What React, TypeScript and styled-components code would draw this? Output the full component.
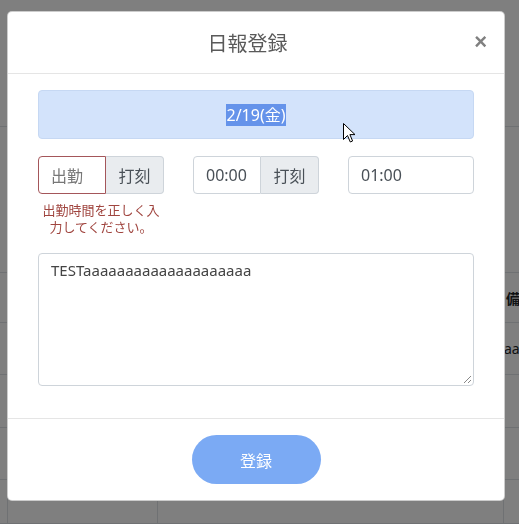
import React from "react";
import styled, { createGlobalStyle } from "styled-components";

const GlobalStyle = createGlobalStyle`
  html, body {
    margin: 0;
    padding: 0;
    width: 519px;
    height: 524px;
    overflow: hidden;
    background: #ffffff;
    font-family: "Noto Sans", "Noto Sans CJK JP", sans-serif;
  }
`;

/* ── Page behind the modal ── */

const Page = styled.div`
  display: flex;
  flex-direction: column;
  width: 519px;
  height: 524px;
`;

const TopArea = styled.div`
  height: 127px;
  border-bottom: 1px solid #dee2e6;
  box-sizing: border-box;
`;

const BgRow = styled.div<{ $h: number }>`
  display: grid;
  grid-template-columns: 7px 150px 346px 1fr;
  height: ${(p) => p.$h}px;
  border-bottom: 1px solid #dee2e6;
  box-sizing: border-box;
`;

const BgCell = styled.div<{ $bold?: boolean }>`
  display: flex;
  align-items: center;
  border-left: 1px solid #dee2e6;
  padding-left: ${(p) => (p.$bold ? 2 : 0)}px;
  font-size: 14px;
  font-weight: ${(p) => (p.$bold ? 700 : 400)};
  color: #212529;
  white-space: nowrap;
  overflow: hidden;
  &:first-child {
    border-left: none;
  }
`;

/* ── Modal ── */

const Overlay = styled.div`
  position: fixed;
  inset: 0;
  background: rgba(0, 0, 0, 0.5);
`;

const ModalWrap = styled.div`
  position: fixed;
  inset: 0;
  padding: 11px 0 0 7px;
`;

const ModalBox = styled.div`
  position: relative;
  width: 498px;
  box-sizing: border-box;
  background: #fff;
  border: 1px solid rgba(0, 0, 0, 0.2);
  border-radius: 5px;
`;

const Header = styled.div`
  position: relative;
  display: flex;
  align-items: center;
  justify-content: center;
  height: 61px;
  padding-right: 17px;
  border-bottom: 1px solid #e5e5e5;
`;

const Title = styled.h4`
  margin: 0;
  font-size: 20px;
  font-weight: 400;
  color: #5a5a5a;
`;

const Close = styled.span`
  position: absolute;
  right: 17px;
  top: 19px;
  font-size: 22px;
  font-weight: 700;
  color: #808080;
  line-height: 1;
  font-family: "Liberation Sans", sans-serif;
`;

const Body = styled.div`
  padding: 16px 30px 32px;
`;

const DateBox = styled.div`
  display: flex;
  align-items: center;
  justify-content: center;
  height: 49px;
  box-sizing: border-box;
  background: #d3e3fb;
  border: 1px solid #c6d8f3;
  border-radius: 4px;
  font-size: 16px;
`;

const Selected = styled.span`
  background: #6593ea;
  color: #fff;
  line-height: 22px;
`;

const FieldRow = styled.div`
  display: grid;
  grid-template-columns: repeat(3, 126px);
  justify-content: space-between;
  margin-top: 17px;
`;

const FieldCol = styled.div`
  display: flex;
  flex-direction: column;
`;

const Group = styled.div`
  display: flex;
  height: 38px;
`;

const Input = styled.div<{ $invalid?: boolean; $grouped?: boolean }>`
  display: flex;
  align-items: center;
  flex: 1;
  box-sizing: border-box;
  padding: 0 12px;
  border: 1px solid ${(p) => (p.$invalid ? "#a4565a" : "#ced4da")};
  border-radius: ${(p) => (p.$grouped ? "4px 0 0 4px" : "4px")};
  font-size: 16px;
  color: ${(p) => (p.$invalid ? "#777" : "#495057")};
  background: #fff;
`;

const Addon = styled.div`
  display: flex;
  align-items: center;
  justify-content: center;
  width: 58px;
  box-sizing: border-box;
  border: 1px solid #ced4da;
  border-left: none;
  border-radius: 0 4px 4px 0;
  background: #e9ecef;
  font-size: 16px;
  color: #495057;
`;

const ErrorText = styled.div`
  margin-top: 8px;
  font-size: 13px;
  line-height: 17px;
  color: #a0453f;
  text-align: center;
`;

const Memo = styled.div`
  position: relative;
  margin-top: 17px;
  height: 133px;
  box-sizing: border-box;
  padding: 6px 12px;
  border: 1px solid #ced4da;
  border-radius: 4px;
  font-size: 15px;
  color: #444;
`;

const Grip = styled.svg`
  position: absolute;
  right: 1px;
  bottom: 1px;
`;

const Footer = styled.div`
  display: flex;
  justify-content: center;
  padding: 16px;
  border-top: 1px solid #e5e5e5;
`;

const SubmitButton = styled.button`
  width: 129px;
  height: 49px;
  border: none;
  border-radius: 25px;
  background: #7baaf4;
  color: #fff;
  font-size: 16px;
  font-family: inherit;
`;

const Cursor = styled.svg`
  position: absolute;
  left: 335px;
  top: 111px;
`;

export default function App() {
  return (
    <>
      <GlobalStyle />
      <Page>
        <TopArea />
        <BgRow $h={146}>
          <BgCell />
          <BgCell />
          <BgCell />
          <BgCell />
        </BgRow>
        <BgRow $h={50}>
          <BgCell />
          <BgCell />
          <BgCell />
          <BgCell $bold>備</BgCell>
        </BgRow>
        <BgRow $h={52}>
          <BgCell />
          <BgCell />
          <BgCell />
          <BgCell>aa</BgCell>
        </BgRow>
        <BgRow $h={53}>
          <BgCell />
          <BgCell />
          <BgCell />
          <BgCell />
        </BgRow>
        <BgRow $h={52}>
          <BgCell />
          <BgCell />
          <BgCell />
          <BgCell />
        </BgRow>
        <BgRow $h={44}>
          <BgCell />
          <BgCell />
          <BgCell />
          <BgCell />
        </BgRow>
      </Page>
      <Overlay />
      <ModalWrap>
        <ModalBox>
          <Header>
            <Title>日報登録</Title>
            <Close>×</Close>
          </Header>
          <Body>
            <DateBox>
              <Selected>2/19(金)</Selected>
            </DateBox>
            <FieldRow>
              <FieldCol>
                <Group>
                  <Input $invalid $grouped>出勤</Input>
                  <Addon>打刻</Addon>
                </Group>
                <ErrorText>
                  出勤時間を正しく入
                  <br />
                  力してください。
                </ErrorText>
              </FieldCol>
              <FieldCol>
                <Group>
                  <Input $grouped>00:00</Input>
                  <Addon>打刻</Addon>
                </Group>
              </FieldCol>
              <FieldCol>
                <Group>
                  <Input>01:00</Input>
                </Group>
              </FieldCol>
            </FieldRow>
            <Memo>
              TESTaaaaaaaaaaaaaaaaaaaa
              <Grip width="9" height="9" viewBox="0 0 9 9">
                <path d="M8 1L1 8M8 5L5 8" stroke="#888" strokeWidth="1" />
              </Grip>
            </Memo>
          </Body>
          <Footer>
            <SubmitButton>登録</SubmitButton>
          </Footer>
          <Cursor width="13" height="21" viewBox="0 0 13 21">
            <path
              d="M0.5 0.5 L0.5 16.5 L4.5 12.5 L7.3 19 L9.6 18 L6.9 11.6 L12 11.6 Z"
              fill="#fff"
              stroke="#000"
              strokeWidth="1"
              strokeLinejoin="round"
            />
          </Cursor>
        </ModalBox>
      </ModalWrap>
    </>
  );
}
